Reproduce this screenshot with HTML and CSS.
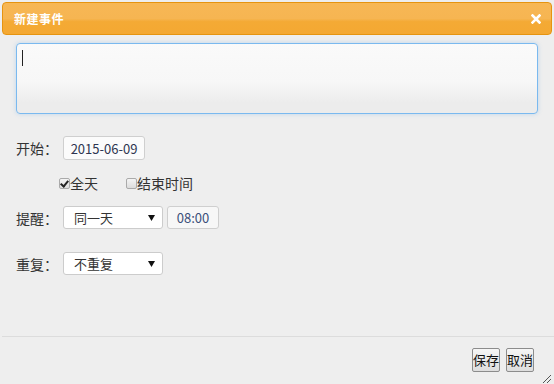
FILE: index.html
```html
<!DOCTYPE html>
<html lang="zh-CN">
<head>
    <meta charset="UTF-8">
    <title>新建事件</title>
    <link rel="stylesheet" href="styles.css">
</head>
<body>
    <div class="dialog">
        <div class="titlebar">
            <span class="title">新建事件</span>
            <svg class="close" width="10" height="10" viewBox="0 0 10 10">
                <path d="M1.5 1.5 L8.5 8.5 M8.5 1.5 L1.5 8.5" stroke="#fff" stroke-width="2.6" stroke-linecap="square"/>
            </svg>
        </div>

        <div class="content">
            <div class="memo"><span class="caret"></span></div>

            <div class="row row-start">
                <span class="label">开始：</span>
                <span class="box date">2015-06-09</span>
            </div>

            <div class="row row-check">
                <span class="check checked"></span><span class="check-text">全天</span>
                <span class="check"></span><span class="check-text">结束时间</span>
            </div>

            <div class="row row-remind">
                <span class="label">提醒：</span>
                <span class="select">同一天<svg class="arrow" width="7" height="6" viewBox="0 0 7 6"><path d="M0 0 H7 L3.5 6 Z" fill="#111"/></svg></span>
                <span class="box time">08:00</span>
            </div>

            <div class="row row-repeat">
                <span class="label">重复：</span>
                <span class="select">不重复<svg class="arrow" width="7" height="6" viewBox="0 0 7 6"><path d="M0 0 H7 L3.5 6 Z" fill="#111"/></svg></span>
            </div>
        </div>

        <div class="footer">
            <button class="btn">保存</button>
            <button class="btn">取消</button>
            <svg class="grip" width="11" height="11" viewBox="0 0 11 11">
                <path d="M10 2 L2 10 M10 6 L6 10" stroke="#555" stroke-width="1"/>
            </svg>
        </div>
    </div>
</body>
</html>
```

FILE: styles.css
```css
html, body {
    margin: 0;
    height: 100%;
}
body {
    background-color: #eeeeee;
    font-family: "Noto Sans CJK SC", "Noto Sans", sans-serif;
    font-size: 14px;
    color: #333;
}
.dialog {
    height: 384px;
    position: relative;
}
.titlebar {
    margin: 2px 2px 0 2px;
    height: 31px;
    border: 1px solid #e69410;
    border-radius: 4px;
    background: linear-gradient(#f7b755 0%, #f6b552 50%, #f4aa35 60%, #f4a832 100%);
    display: flex;
    align-items: center;
    justify-content: space-between;
    padding: 0 10px 0 11px;
}
.title {
    color: #fff;
    font-weight: bold;
    font-size: 12px;
    letter-spacing: 0.5px;
}
.close {
    margin-top: 1px;
}
.content {
    padding: 8px 0 0 16px;
}
.memo {
    width: 522px;
    height: 71px;
    box-sizing: border-box;
    border: 1px solid #7ab9ef;
    border-radius: 4px;
    background: linear-gradient(#fafafa 0%, #f7f7f7 55%, #ececec 85%, #ececec 100%);
    box-shadow: 0 0 4px rgba(100, 170, 230, 0.35);
    padding: 6px 5px;
}
.caret {
    display: block;
    width: 1px;
    height: 16px;
    background: #222;
}
.row {
    display: flex;
    align-items: center;
}
.label {
    width: 47px;
    color: #333;
}
.row-start {
    margin-top: 22px;
}
.box {
    height: 24px;
    box-sizing: border-box;
    border: 1px solid #cfcfcf;
    border-radius: 3px;
    background: #fbfbfb;
    display: flex;
    align-items: center;
    justify-content: center;
    font-size: 13px;
}
.date {
    width: 82px;
    color: #2e3550;
}
.row-check {
    margin-top: 12px;
    height: 22px;
    padding-left: 43px;
}
.check {
    width: 9px;
    height: 9px;
    border: 1px solid #aaa;
    border-radius: 2px;
    background: linear-gradient(#f4f4f4, #dcdcdc);
    position: relative;
}
.check.checked::after {
    content: "";
    position: absolute;
    left: 2px;
    top: 0px;
    width: 3px;
    height: 6px;
    border: solid #222;
    border-width: 0 2px 2px 0;
    transform: rotate(40deg);
}
.check-text {
    margin-right: 28px;
    color: #333;
}
.row-remind {
    margin-top: 12px;
}
.select {
    width: 100px;
    height: 23px;
    box-sizing: border-box;
    border: 1px solid #cccccc;
    border-radius: 3px;
    background: #fff;
    display: flex;
    align-items: center;
    justify-content: space-between;
    padding: 0 6px 0 10px;
    font-size: 13px;
    color: #333;
}
.arrow {
    margin-right: 1px;
}
.time {
    width: 52px;
    height: 23px;
    margin-left: 4px;
    color: #3b4f7a;
    background: #f7f7f7;
}
.row-repeat {
    margin-top: 23px;
}
.footer {
    position: absolute;
    left: 2px;
    right: 0;
    top: 334px;
    bottom: 0;
    border-top: 1px solid #dcdcdc;
    display: flex;
    justify-content: flex-end;
    align-items: flex-start;
    padding: 11px 20px 0 0;
    gap: 6px;
}
.btn {
    font-family: "Noto Sans CJK SC", sans-serif;
    font-size: 13px;
    height: 24px;
    width: 28px;
    padding: 0;
    border: 1px solid #8c8c8c;
    border-radius: 2px;
    background: linear-gradient(#f6f6f6, #dddddd);
    color: #111;
    line-height: 20px;
}
.grip {
    position: absolute;
    right: 2px;
    bottom: 2px;
}
```
